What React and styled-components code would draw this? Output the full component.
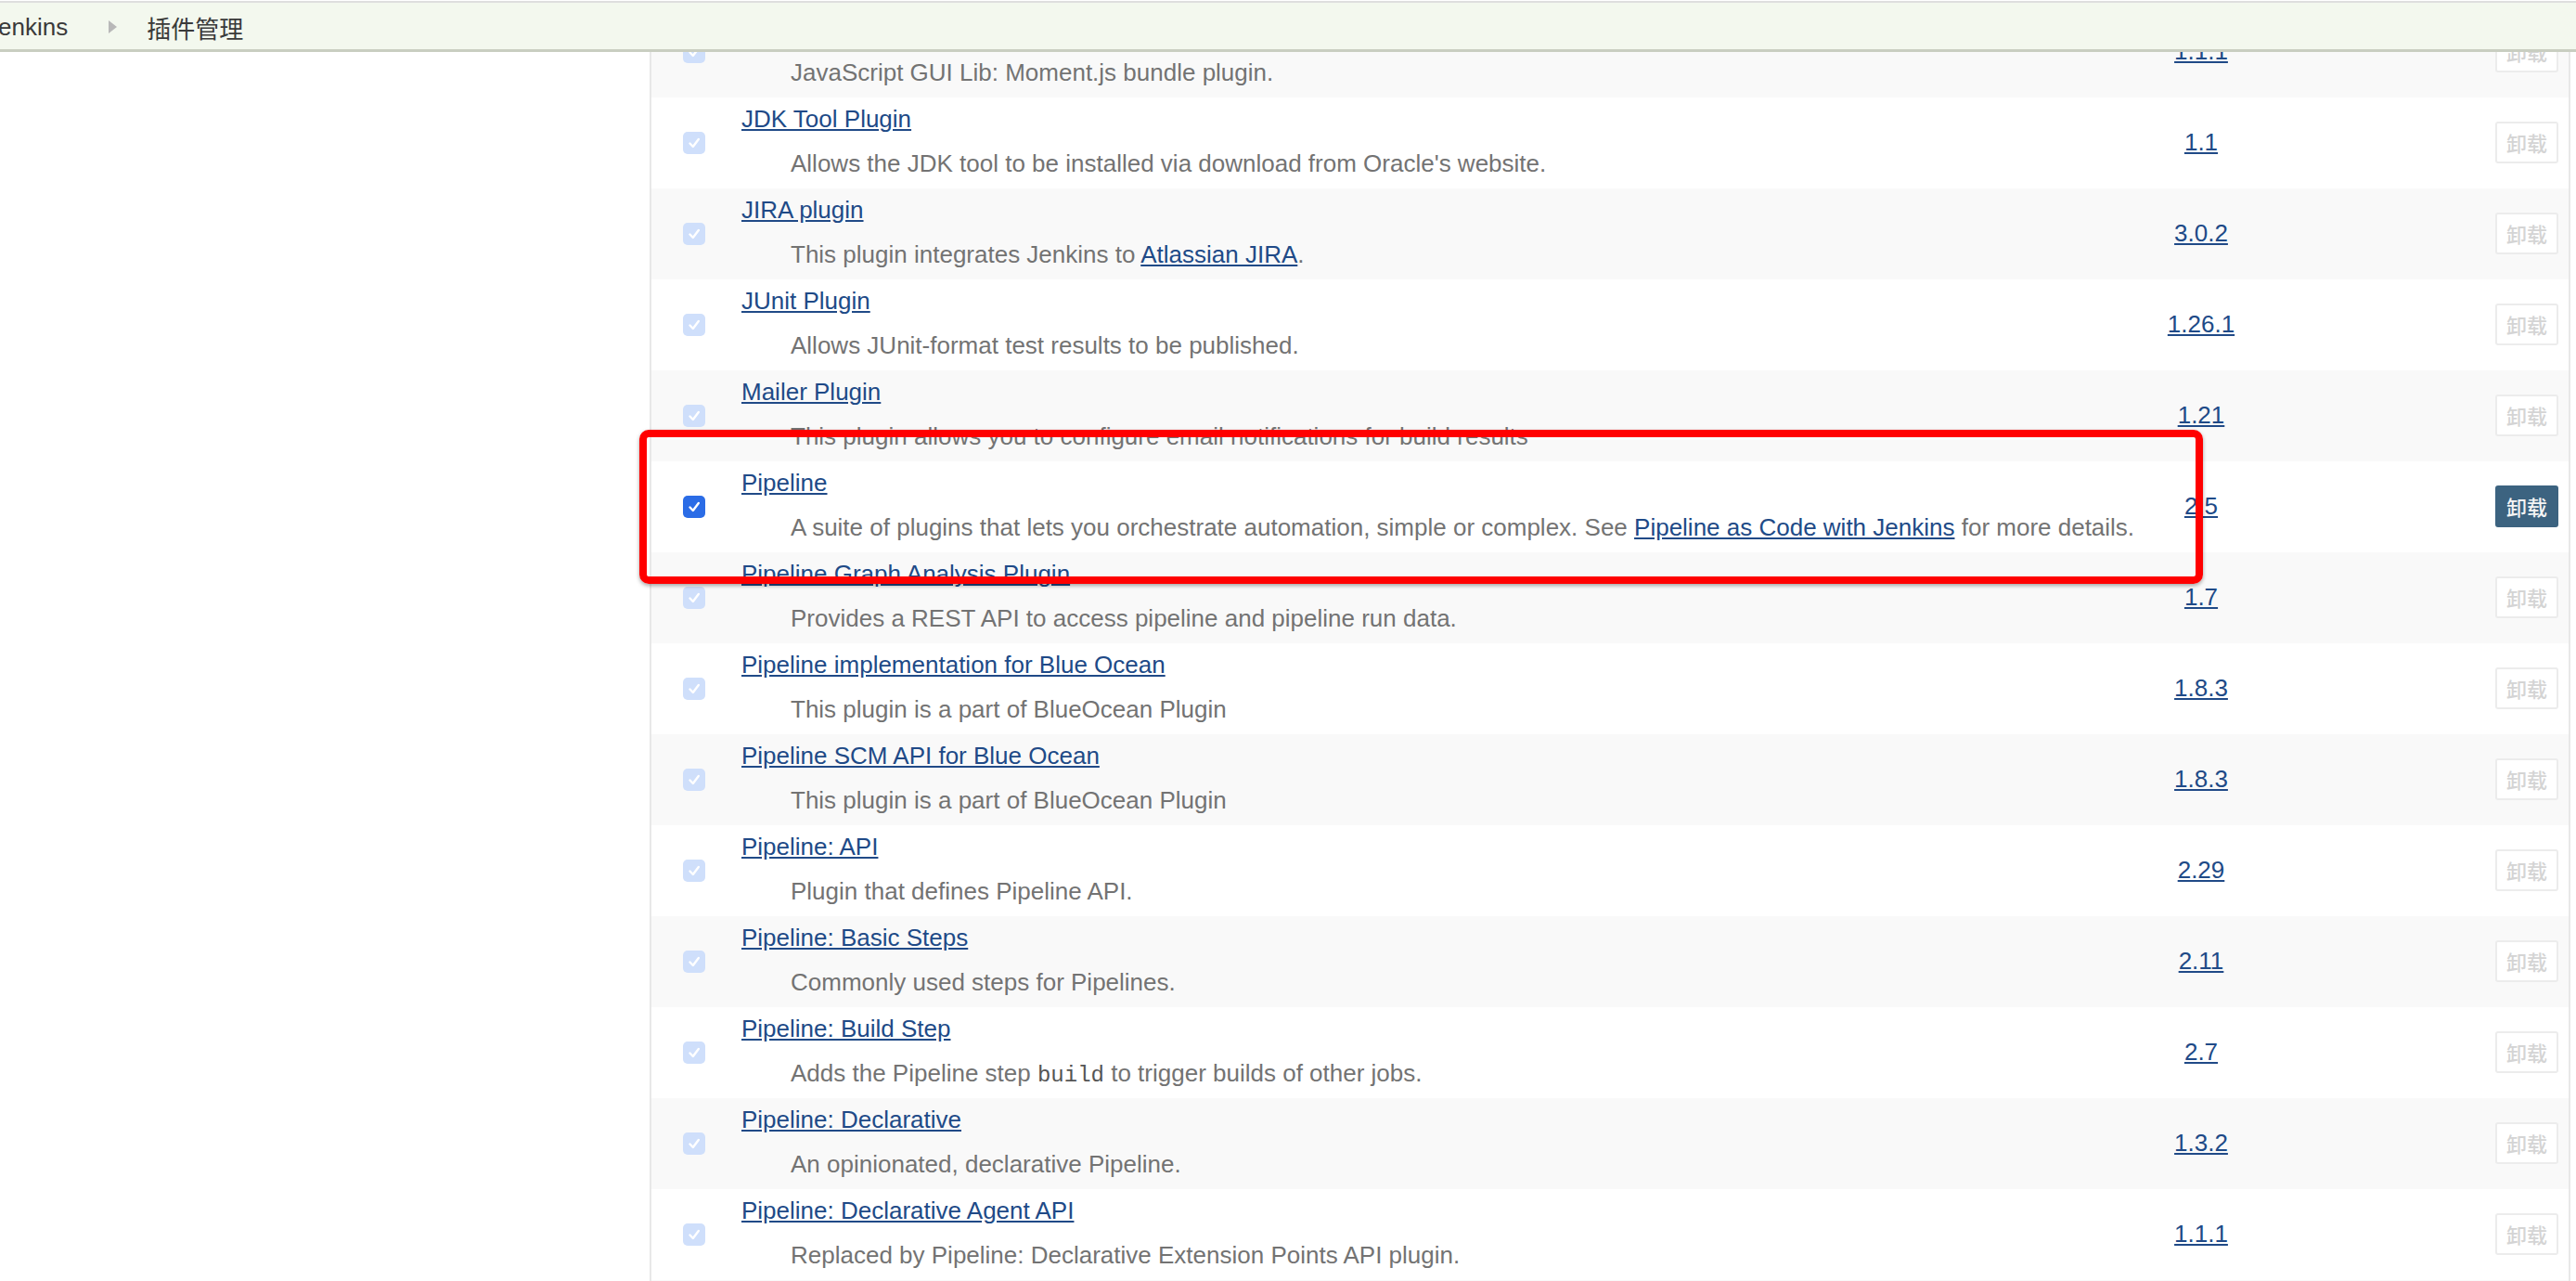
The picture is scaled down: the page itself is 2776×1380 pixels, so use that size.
import React from "react";
import styled, { createGlobalStyle } from "styled-components";

const GlobalStyle = createGlobalStyle`
  html, body {
    margin: 0;
    padding: 0;
    background: #fff;
  }
  body {
    font-family: "Liberation Sans", Arial, "Noto Sans CJK SC", sans-serif;
    font-size: 26px;
    color: #333;
  }
`;

const plugins = [
  {
    name: "JavaScript GUI Lib: Moment.js bundle plugin",
    desc: ["JavaScript GUI Lib: Moment.js bundle plugin."],
    version: "1.1.1",
  },
  {
    name: "JDK Tool Plugin",
    desc: ["Allows the JDK tool to be installed via download from Oracle's website."],
    version: "1.1",
  },
  {
    name: "JIRA plugin",
    desc: ["This plugin integrates Jenkins to ", { link: "Atlassian JIRA" }, "."],
    version: "3.0.2",
  },
  {
    name: "JUnit Plugin",
    desc: ["Allows JUnit-format test results to be published."],
    version: "1.26.1",
  },
  {
    name: "Mailer Plugin",
    desc: ["This plugin allows you to configure email notifications for build results"],
    version: "1.21",
  },
  {
    name: "Pipeline",
    desc: [
      "A suite of plugins that lets you orchestrate automation, simple or complex. See ",
      { link: "Pipeline as Code with Jenkins" },
      " for more details.",
    ],
    version: "2.5",
    active: true,
  },
  {
    name: "Pipeline Graph Analysis Plugin",
    desc: ["Provides a REST API to access pipeline and pipeline run data."],
    version: "1.7",
  },
  {
    name: "Pipeline implementation for Blue Ocean",
    desc: ["This plugin is a part of BlueOcean Plugin"],
    version: "1.8.3",
  },
  {
    name: "Pipeline SCM API for Blue Ocean",
    desc: ["This plugin is a part of BlueOcean Plugin"],
    version: "1.8.3",
  },
  {
    name: "Pipeline: API",
    desc: ["Plugin that defines Pipeline API."],
    version: "2.29",
  },
  {
    name: "Pipeline: Basic Steps",
    desc: ["Commonly used steps for Pipelines."],
    version: "2.11",
  },
  {
    name: "Pipeline: Build Step",
    desc: ["Adds the Pipeline step ", { code: "build" }, " to trigger builds of other jobs."],
    version: "2.7",
  },
  {
    name: "Pipeline: Declarative",
    desc: ["An opinionated, declarative Pipeline."],
    version: "1.3.2",
  },
  {
    name: "Pipeline: Declarative Agent API",
    desc: ["Replaced by Pipeline: Declarative Extension Points API plugin."],
    version: "1.1.1",
  },
  {
    name: "Pipeline: Declarative Extension Points API",
    desc: ["APIs for extension points used in Declarative Pipelines."],
    version: "1.3.2",
  },
];

export default function App() {
  return (
    <>
      <GlobalStyle />
      <BreadcrumbBar>
        <Crumbs>
          <Crumb>Jenkins</Crumb>
          <Separator />
          <Crumb>插件管理</Crumb>
        </Crumbs>
      </BreadcrumbBar>
      <Page>
        <SidePanel />
        <PluginTable>
          {plugins.map((p, i) => (
            <Row key={p.name} striped={i % 2 === 0}>
              <CheckCell>
                <CheckBox active={p.active}>
                  <svg width="24" height="24" viewBox="0 0 24 24">
                    <path
                      d="M7.5 12.5 L10.8 16 L16.8 8"
                      fill="none"
                      stroke="#fff"
                      strokeWidth="2.4"
                      strokeLinecap="round"
                      strokeLinejoin="round"
                    />
                  </svg>
                </CheckBox>
              </CheckCell>
              <NameCell>
                <TitleLine>
                  <Link href="#">{p.name}</Link>
                </TitleLine>
                <Excerpt>
                  {p.desc.map((part, j) =>
                    typeof part === "string" ? (
                      <span key={j}>{part}</span>
                    ) : part.link ? (
                      <Link key={j} href="#">
                        {part.link}
                      </Link>
                    ) : (
                      <Code key={j}>{part.code}</Code>
                    )
                  )}
                </Excerpt>
              </NameCell>
              <VersionCell>
                <Link href="#">{p.version}</Link>
              </VersionCell>
              <ButtonCell>
                <UninstallButton active={p.active}>卸载</UninstallButton>
              </ButtonCell>
            </Row>
          ))}
          <Highlight />
        </PluginTable>
      </Page>
    </>
  );
}

const BreadcrumbBar = styled.div`
  position: fixed;
  top: 0;
  left: 0;
  right: 0;
  z-index: 10;
  height: 50px;
  border-top: 2px solid #dedede;
  margin-top: 1px;
  border-bottom: 3px solid #c9cec1;
  background-color: #f3f8ee;
  display: flex;
  align-items: center;
  overflow: hidden;
`;
const Crumbs = styled.div`
  display: flex;
  align-items: center;
  margin-left: -15px;
  padding-top: 2px;
`;
const Crumb = styled.span`
  font-family: "Liberation Sans", Arial, "Noto Sans CJK SC", sans-serif;
  font-size: 26px;
  color: #3a3a3a;
`;
const Separator = styled.span`
  width: 0;
  height: 0;
  margin: 0 32px 0 44px;
  border-top: 7px solid transparent;
  border-bottom: 7px solid transparent;
  border-left: 9px solid #b8b8b8;
`;
const Page = styled.div`
  display: flex;
  padding-top: 7px;
`;
const SidePanel = styled.div`
  width: 700px;
  flex-shrink: 0;
`;
const PluginTable = styled.div`
  position: relative;
  width: 2066px;
  flex-shrink: 0;
  border-left: 2px solid #e8e8e8;
  border-right: 2px solid #e8e8e8;
`;
const Row = styled.div`
  display: grid;
  grid-template-columns: 97px 1fr 100px 346px;
  height: 98px;
  background-color: ${(p) => (p.striped ? "#f9f9f9" : "#fff")};
`;
const CheckCell = styled.div`
  display: flex;
  align-items: center;
  padding-left: 34px;
`;
const CheckBox = styled.span`
  width: 24px;
  height: 24px;
  border-radius: 5px;
  background-color: ${(p) => (p.active ? "#2b6ce6" : "#cfdffb")};
  display: flex;
  margin-top: -1px;
`;
const NameCell = styled.div`
  padding-top: 8px;
  line-height: 30px;
  white-space: nowrap;
`;
const Link = styled.a`
  color: #204a87;
  text-decoration: underline;
`;
const TitleLine = styled.div`
  height: 30px;
`;
const Excerpt = styled.div`
  margin-top: 18px;
  padding-left: 53px;
  color: #737373;
`;
const Code = styled.code`
  font-family: "Liberation Mono", "Courier New", monospace;
  font-size: 24px;
  color: #555;
`;
const VersionCell = styled.div`
  display: flex;
  align-items: center;
  justify-content: center;
  padding-bottom: 2px;
`;
const ButtonCell = styled.div`
  display: flex;
  align-items: center;
  justify-content: flex-end;
  padding-right: 11px;
`;
const UninstallButton = styled.button`
  width: 68px;
  height: 45px;
  padding: 0;
  border: 2px solid ${(p) => (p.active ? "#3c6380" : "#ececec")};
  border-radius: 3px;
  background-color: ${(p) => (p.active ? "#3c6380" : "#fff")};
  color: ${(p) => (p.active ? "#f4f4f4" : "#d4d4d4")};
  font-family: "Noto Sans CJK SC", sans-serif;
  font-size: 22px;
  font-weight: 500;
  margin-top: -2px;
`;
const Highlight = styled.div`
  position: absolute;
  left: -13px;
  top: 456px;
  width: 1685px;
  height: 166px;
  box-sizing: border-box;
  border: 8px solid #ff0000;
  border-radius: 10px;
  box-shadow: 0 2px 4px rgba(0, 0, 0, 0.35);
  pointer-events: none;
`;
